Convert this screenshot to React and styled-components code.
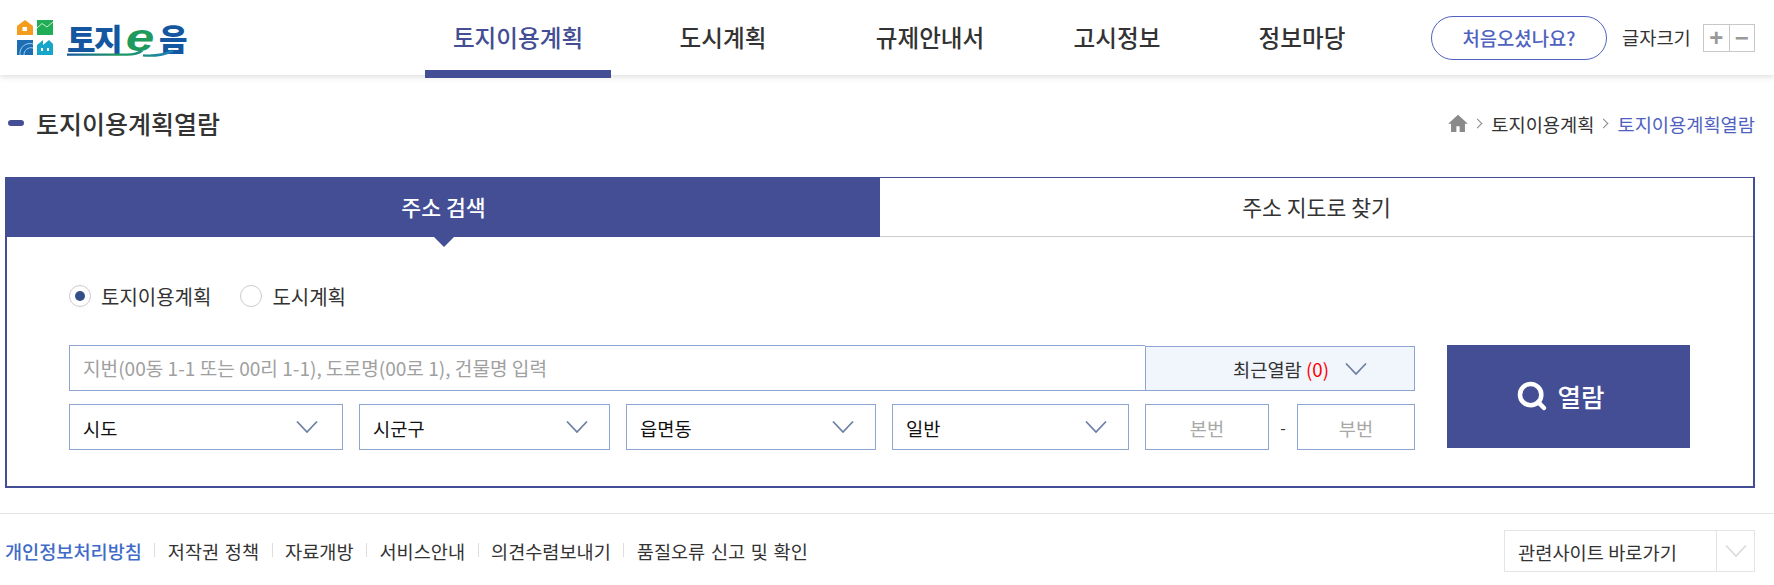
import React from "react";
import styled, { createGlobalStyle } from "styled-components";
import { Search } from "lucide-react";

const NAVY = "#434e94";
const LINE = "#8da5d3";
const FONT = `"Noto Sans CJK KR", "Noto Sans", sans-serif`;

const GlobalStyle = createGlobalStyle`
  html, body { margin: 0; padding: 0; background: #fff; }
  body { font-family: ${FONT}; color: #222; }
  * { box-sizing: border-box; }
`;

const Chevron = ({ color = "#6d7fa3" }) => (
  <svg width="22" height="14" viewBox="0 0 22 14" fill="none">
    <polyline points="1,1.5 11,12 21,1.5" stroke={color} strokeWidth="1.8" />
  </svg>
);

const navItems = [
  { label: "토지이용계획", width: 186, active: true },
  { label: "도시계획", width: 224 },
  { label: "규제안내서", width: 190 },
  { label: "고시정보", width: 184 },
  { label: "정보마당", width: 186 },
];

const footerLinks = ["저작권 정책", "자료개방", "서비스안내", "의견수렴보내기", "품질오류 신고 및 확인"];

const App = () => {
  return (
    <Page>
      <GlobalStyle />
      <Header>
        <Logo>
          <LogoMark viewBox="0 0 36 36" aria-hidden="true">
            <path d="M0 6 L8 0 L16 6 V15 H0 Z" fill="#f39c1f" />
            <rect x="5.5" y="7" width="4.5" height="4" fill="#fff" />
            <rect x="20" y="0" width="16" height="15" fill="#1fae55" />
            <polyline points="20,8 25,3.5 30,7 36,2" stroke="#cdeccf" strokeWidth="1" fill="none" />
            <rect x="0" y="20" width="16" height="15" fill="#1c6db3" />
            <path d="M3 35 A10 10 0 0 1 16 24 M7 35 A7 7 0 0 1 16 28" stroke="#9fd0ee" strokeWidth="1" fill="none" />
            <path d="M20 35 V25 L26 20 V25 L32 20 L36 24 V35 Z" fill="#16a6c9" />
            <rect x="24" y="28" width="2" height="3" fill="#fff" />
            <rect x="30" y="28" width="2" height="3" fill="#fff" />
          </LogoMark>
          <LogoWord>
            토지<LogoE>e</LogoE>음
            <LogoSwoosh viewBox="0 0 122 10" preserveAspectRatio="none" aria-hidden="true">
              <defs>
                <linearGradient id="swoosh" x1="0" x2="1" y1="0" y2="0">
                  <stop offset="0" stopColor="#14569f" />
                  <stop offset="0.5" stopColor="#1d9a5c" />
                  <stop offset="1" stopColor="#1c7dbb" />
                </linearGradient>
              </defs>
              <path d="M0 7 H60 C68 7 72 5 75 2 M76 8 C86 9 96 8 106 2" stroke="url(#swoosh)" strokeWidth="3" fill="none" />
            </LogoSwoosh>
          </LogoWord>
        </Logo>
        <Nav>
          {navItems.map((item) => (
            <NavItem key={item.label} $width={item.width} $active={item.active}>
              {item.label}
            </NavItem>
          ))}
        </Nav>
        <Tools>
          <GuideButton>처음오셨나요?</GuideButton>
          <FontLabel>글자크기</FontLabel>
          <FontButtons>
            <FontButton>+</FontButton>
            <FontButton>−</FontButton>
          </FontButtons>
        </Tools>
      </Header>

      <TitleRow>
        <Title>토지이용계획열람</Title>
        <Crumbs>
          <svg width="20" height="18" viewBox="0 0 24 22" aria-hidden="true">
            <path d="M12 1 L0 12 H3.5 V22 H10 V15 H14 V22 H20.5 V12 H24 Z" fill="#8a8a8a" />
          </svg>
          <CrumbSep />
          <span>토지이용계획</span>
          <CrumbSep />
          <CrumbCurrent>토지이용계획열람</CrumbCurrent>
        </Crumbs>
      </TitleRow>

      <Panel>
        <Tabs>
          <Tab $active>주소 검색</Tab>
          <Tab>주소 지도로 찾기</Tab>
        </Tabs>
        <PanelBody>
          <Radios>
            <RadioLabel>
              <RadioDot $checked />
              토지이용계획
            </RadioLabel>
            <RadioLabel>
              <RadioDot />
              도시계획
            </RadioLabel>
          </Radios>
          <SearchArea>
            <Fields>
              <InputRow>
                <AddressInput placeholder="지번(00동 1-1 또는 00리 1-1), 도로명(00로 1), 건물명 입력" />
                <RecentBox>
                  <span>
                    최근열람 <RecentCount>(0)</RecentCount>
                  </span>
                  <Chevron />
                </RecentBox>
              </InputRow>
              <SelectRow>
                <SelectBox $width={274} $arrowGap={24}>시도<Chevron /></SelectBox>
                <SelectBox $width={251}>시군구<Chevron /></SelectBox>
                <SelectBox $width={250}>읍면동<Chevron /></SelectBox>
                <SelectBox $width={237}>일반<Chevron /></SelectBox>
                <LotInput $width={124} placeholder="본번" />
                <LotDash>-</LotDash>
                <LotInput $width={118} placeholder="부번" />
              </SelectRow>
            </Fields>
            <ViewButton>
              <Search size={32} strokeWidth={3.4} />
              열람
            </ViewButton>
          </SearchArea>
        </PanelBody>
      </Panel>

      <Footer>
        <FooterLinks>
          <FooterLink $primary>개인정보처리방침</FooterLink>
          {footerLinks.map((link) => (
            <FooterLink key={link}>{link}</FooterLink>
          ))}
        </FooterLinks>
        <SiteSelect>
          <SiteLabel>관련사이트 바로가기</SiteLabel>
          <SiteArrow>
            <Chevron color="#dcdcdc" />
          </SiteArrow>
        </SiteSelect>
      </Footer>
    </Page>
  );
};

export default App;

const Page = styled.div`
  width: 1774px;
  height: 585px;
  overflow: hidden;
  background: #fff;
`;

const Header = styled.header`
  display: flex;
  align-items: center;
  height: 75px;
  padding: 0 19px 0 17px;
  box-shadow: 0 2px 6px rgba(0, 0, 0, 0.13);
`;

const Logo = styled.div`
  display: flex;
  flex-shrink: 0;
  align-items: center;
  gap: 14px;
  width: 408px;
`;

const LogoMark = styled.svg`
  width: 36px;
  height: 36px;
`;

const LogoWord = styled.div`
  position: relative;
  font-size: 31px;
  font-weight: 900;
  line-height: 36px;
  letter-spacing: -1.5px;
  color: #14569f;
  white-space: nowrap;
`;

const LogoE = styled.span`
  display: inline-block;
  width: 32px;
  margin: 0 4px 0 2px;
  font-family: "Liberation Sans", sans-serif;
  font-size: 38px;
  font-style: italic;
  font-weight: 700;
  line-height: 30px;
  text-align: center;
  color: #1d9a5c;
  transform: scaleX(1.35);
`;

const LogoSwoosh = styled.svg`
  position: absolute;
  left: 0;
  bottom: -1px;
  width: 122px;
  height: 8px;
`;

const Nav = styled.nav`
  display: flex;
  flex-shrink: 0;
  height: 75px;
`;

const NavItem = styled.a`
  position: relative;
  display: flex;
  align-items: center;
  justify-content: center;
  width: ${(p) => p.$width}px;
  padding-bottom: 2px;
  font-size: 23.6px;
  font-weight: 500;
  color: ${(p) => (p.$active ? NAVY : "#333")};

  &::after {
    content: "";
    display: ${(p) => (p.$active ? "block" : "none")};
    position: absolute;
    left: 0;
    right: 0;
    bottom: -3px;
    height: 8px;
    background: ${NAVY};
  }
`;

const Tools = styled.div`
  display: flex;
  flex-shrink: 0;
  align-items: center;
  margin-left: 36px;
`;

const GuideButton = styled.button`
  width: 176px;
  height: 44px;
  border: 1px solid #4f62bf;
  border-radius: 22px;
  background: #fff;
  font-family: ${FONT};
  font-size: 18.8px;
  font-weight: 500;
  color: #4f62bf;
`;

const FontLabel = styled.span`
  margin-left: 15px;
  padding-bottom: 2px;
  font-size: 18.7px;
  color: #333;
  white-space: nowrap;
`;

const FontButtons = styled.div`
  display: flex;
  margin-left: 12px;
  border: 1px solid #c8c8c8;
`;

const FontButton = styled.span`
  display: flex;
  align-items: center;
  justify-content: center;
  width: 25px;
  height: 26px;
  font-family: "Liberation Sans", sans-serif;
  font-size: 24px;
  font-weight: 700;
  color: #999;

  & + & {
    border-left: 1px solid #c8c8c8;
  }
`;

const TitleRow = styled.div`
  display: flex;
  align-items: center;
  justify-content: space-between;
  height: 100px;
  margin-bottom: 2px;
  padding: 0 19px 4px 8px;
`;

const Title = styled.h1`
  display: flex;
  align-items: center;
  gap: 12px;
  margin: 0;
  font-size: 25px;
  font-weight: 500;
  color: #333;

  &::before {
    content: "";
    width: 16px;
    height: 6px;
    border-radius: 3px;
    background: ${NAVY};
  }
`;

const Crumbs = styled.div`
  display: flex;
  align-items: center;
  font-size: 18.7px;
  color: #333;
`;

const CrumbSep = styled.i`
  display: block;
  width: 7px;
  height: 7px;
  margin: 0 10px 0 6px;
  border-top: 1px solid #888;
  border-right: 1px solid #888;
  transform: rotate(45deg);
`;

const CrumbCurrent = styled.span`
  color: #4f62bf;
`;

const Panel = styled.section`
  width: 1750px;
  margin-left: 5px;
  border: 2px solid ${NAVY};
  border-top-width: 1px;
`;

const Tabs = styled.div`
  display: grid;
  grid-template-columns: 873px 1fr;
  height: 59px;
`;

const Tab = styled.div`
  position: relative;
  display: flex;
  align-items: center;
  justify-content: center;
  padding-bottom: 2px;
  font-size: 21.6px;
  font-weight: ${(p) => (p.$active ? 500 : 400)};
  color: ${(p) => (p.$active ? "#fff" : "#333")};
  background: ${(p) => (p.$active ? NAVY : "#fff")};
  border-bottom: 1px solid ${(p) => (p.$active ? NAVY : "#ccc")};

  &::after {
    content: "";
    display: ${(p) => (p.$active ? "block" : "none")};
    position: absolute;
    left: 50%;
    top: 100%;
    margin-left: -11px;
    border: 11px solid transparent;
    border-top-color: ${NAVY};
    border-bottom-width: 0;
  }
`;

const PanelBody = styled.div`
  padding: 48px 0 36px 62px;
`;

const Radios = styled.div`
  display: flex;
  gap: 29px;
  margin-bottom: 38px;
`;

const RadioLabel = styled.label`
  display: flex;
  align-items: center;
  gap: 10px;
  height: 22px;
  font-size: 20px;
  color: #333;
`;

const RadioDot = styled.span`
  display: flex;
  align-items: center;
  justify-content: center;
  width: 22px;
  height: 22px;
  border: 1px solid #ccc;
  border-radius: 50%;

  &::after {
    content: "";
    display: ${(p) => (p.$checked ? "block" : "none")};
    width: 10px;
    height: 10px;
    border-radius: 50%;
    background: #34508a;
  }
`;

const SearchArea = styled.div`
  display: flex;
  align-items: flex-start;
  gap: 32px;
`;

const Fields = styled.div`
  display: flex;
  flex-direction: column;
  gap: 13px;
  width: 1346px;
`;

const InputRow = styled.div`
  display: flex;
`;

const AddressInput = styled.input`
  flex: 1;
  height: 46px;
  padding: 0 13px;
  border: 1px solid ${LINE};
  border-right: 0;
  outline: none;
  font-family: ${FONT};
  font-size: 19.1px;

  &::placeholder {
    color: #a0a0a0;
  }
`;

const RecentBox = styled.div`
  display: flex;
  align-items: center;
  justify-content: flex-end;
  gap: 16px;
  width: 270px;
  height: 45px;
  margin-top: 1px;
  padding-right: 47px;
  border: 1px solid ${LINE};
  background: #f1f6fd;
  font-size: 18.7px;
  color: #333;
`;

const RecentCount = styled.span`
  color: #f00;
`;

const SelectRow = styled.div`
  display: flex;
  align-items: center;
`;

const SelectBox = styled.div`
  display: flex;
  align-items: center;
  justify-content: space-between;
  width: ${(p) => p.$width}px;
  height: 46px;
  margin-right: 16px;
  padding: 0 ${(p) => p.$arrowGap || 21}px 0 13px;
  border: 1px solid ${LINE};
  font-size: 18.7px;
  color: #111;
`;

const LotInput = styled.input`
  width: ${(p) => p.$width}px;
  height: 46px;
  border: 1px solid ${LINE};
  outline: none;
  text-align: center;
  font-family: ${FONT};
  font-size: 18.7px;

  &::placeholder {
    color: #a8a8a8;
  }
`;

const LotDash = styled.span`
  width: 28px;
  text-align: center;
  font-size: 16px;
  color: #333;
`;

const ViewButton = styled.button`
  display: flex;
  align-items: center;
  justify-content: center;
  gap: 10px;
  width: 243px;
  height: 103px;
  padding: 0 17px 2px 0;
  border: 0;
  background: ${NAVY};
  font-family: ${FONT};
  font-size: 25.5px;
  font-weight: 500;
  color: #fff;
`;

const Footer = styled.footer`
  display: flex;
  align-items: center;
  justify-content: space-between;
  height: 72px;
  margin-top: 25px;
  padding: 3px 19px 0 5px;
  border-top: 1px solid #e4e4e4;
`;

const FooterLinks = styled.div`
  display: flex;
  padding-bottom: 2px;
`;

const FooterLink = styled.a`
  display: flex;
  align-items: center;
  font-size: 18.6px;
  word-spacing: 1.5px;
  color: ${(p) => (p.$primary ? "#3f6bc9" : "#333")};
  font-weight: ${(p) => (p.$primary ? 500 : 400)};

  &::before {
    content: "";
    display: ${(p) => (p.$primary ? "none" : "block")};
    width: 1px;
    height: 14px;
    margin: 0 12.5px;
    background: #ddd;
  }
`;

const SiteSelect = styled.div`
  display: flex;
  width: 251px;
  height: 42px;
  border: 1px solid #e4e4e4;
`;

const SiteLabel = styled.span`
  display: flex;
  align-items: center;
  flex: 1;
  padding-left: 13px;
  font-size: 18.7px;
  color: #333;
`;

const SiteArrow = styled.span`
  display: flex;
  align-items: center;
  justify-content: center;
  width: 38px;
  border-left: 1px solid #e4e4e4;
`;
